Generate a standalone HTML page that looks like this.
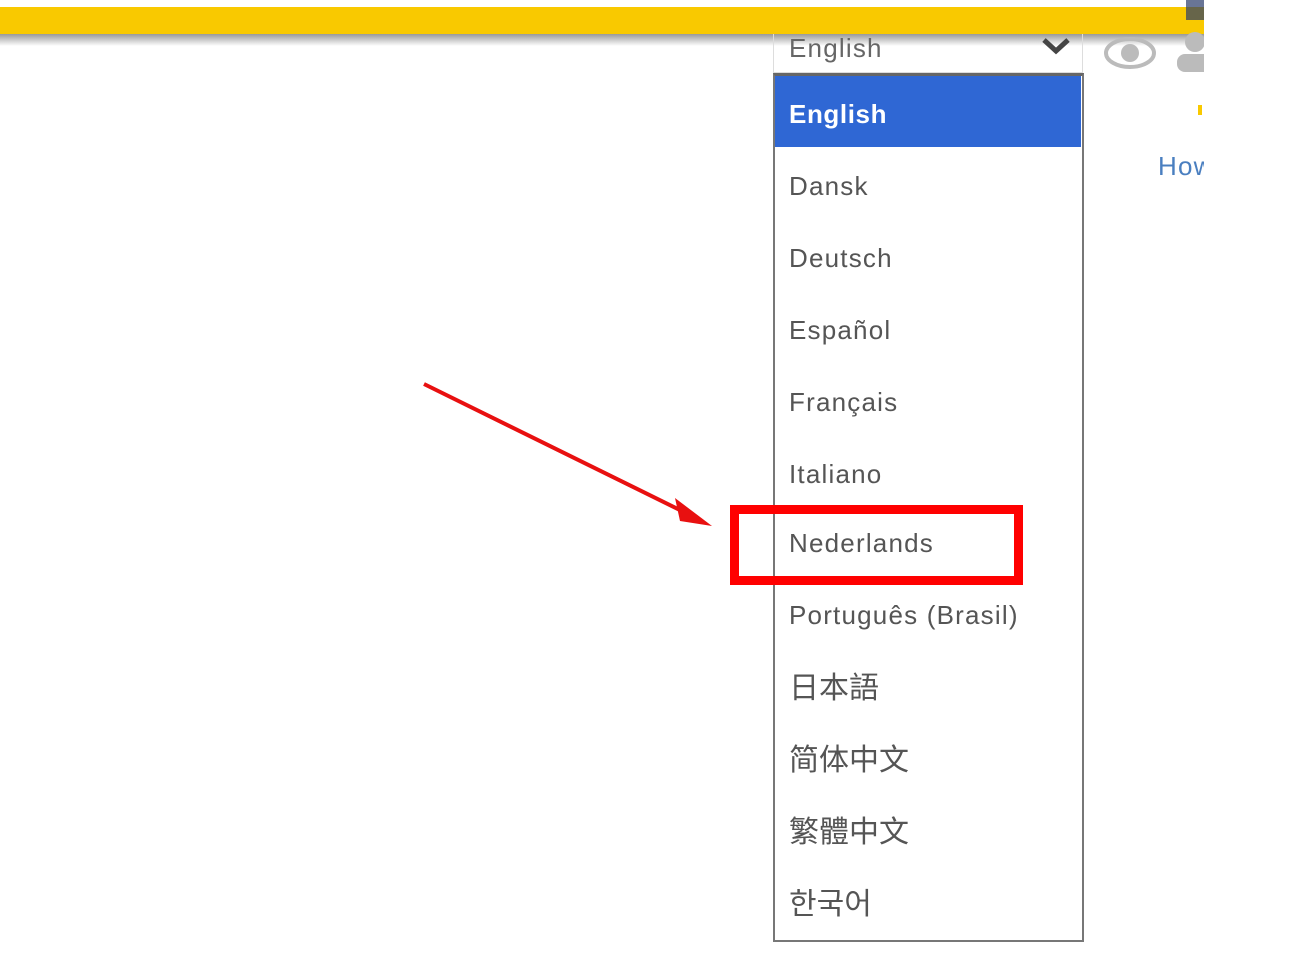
<!DOCTYPE html>
<html><head><meta charset="utf-8"><style>
body{margin:0;width:1289px;height:961px;background:#fff;position:relative;overflow:hidden;font-family:"Liberation Sans","Noto Sans CJK SC",sans-serif}
.bar{position:absolute;left:0;top:7px;width:1204px;height:27px;background:#f9c900}
.sh{position:absolute;left:0;top:34px;width:1204px;height:12px;background:linear-gradient(#999,#fff)}
.sel{position:absolute;left:773px;top:34px;width:308px;height:38px;border:1px solid #ddd;border-top:none;background:transparent}
.t{position:absolute;left:789px;font-size:26px;color:#555;line-height:30px;letter-spacing:1.2px}
.c{font-size:30px;letter-spacing:0}
.list{position:absolute;left:773px;top:73px;width:307px;height:864px;border:2px solid #777;border-top:3px solid #666}
.hl{position:absolute;left:775px;top:76px;width:306px;height:71px;background:#2f67d4}
.red{position:absolute;left:730px;top:505px;width:275px;height:62px;border:9px solid #f00}
.clip{position:absolute;left:1204px;top:0;width:85px;height:961px;background:#fff}
</style></head><body>
<div class="bar"></div><div class="sh"></div>
<div style="position:absolute;left:1186px;top:0;width:18px;height:20px;background:#2a3a6a;opacity:.7"></div>
<div class="sel"></div>
<div class="t" style="top:33px;color:#666">English</div>
<svg style="position:absolute;left:1040px;top:36px" width="32" height="20"><path d="M4 4 L16 15 L28 4" stroke="#444" stroke-width="5" fill="none"/></svg>
<svg style="position:absolute;left:1103px;top:35px" width="54" height="36"><ellipse cx="27" cy="18" rx="24" ry="14" fill="none" stroke="#bbb" stroke-width="4"/><circle cx="27" cy="18" r="9" fill="#bbb"/></svg>
<svg style="position:absolute;left:1175px;top:30px" width="40" height="45"><circle cx="20" cy="12" r="10" fill="#bbb"/><rect x="2" y="24" width="36" height="18" rx="8" fill="#bbb"/></svg>
<div class="t" style="left:1158px;top:151px;color:#4a7fc0">How</div>
<div style="position:absolute;left:1198px;top:105px;width:4px;height:10px;background:#f9c900"></div>
<div class="clip"></div>
<div class="list"></div>
<div class="hl"></div>
<div class="t" style="top:99px;color:#fff;font-weight:bold;letter-spacing:.6px">English</div>
<div class="t" style="top:171px">Dansk</div>
<div class="t" style="top:243px">Deutsch</div>
<div class="t" style="top:315px">Español</div>
<div class="t" style="top:387px">Français</div>
<div class="t" style="top:459px">Italiano</div>
<div class="t" style="top:528px">Nederlands</div>
<div class="t" style="top:600px">Português (Brasil)</div>
<div class="t c" style="top:674px">日本語</div>
<div class="t c" style="top:746px">简体中文</div>
<div class="t c" style="top:818px">繁體中文</div>
<div class="t c" style="top:890px">한국어</div>
<div class="red"></div>
<svg style="position:absolute;left:0;top:0" width="1289" height="961"><path d="M424 384 L690 515" stroke="#e81010" stroke-width="4"/><path d="M712 526 L675 498 L680 521 Z" fill="#e81010"/></svg>
</body></html>
